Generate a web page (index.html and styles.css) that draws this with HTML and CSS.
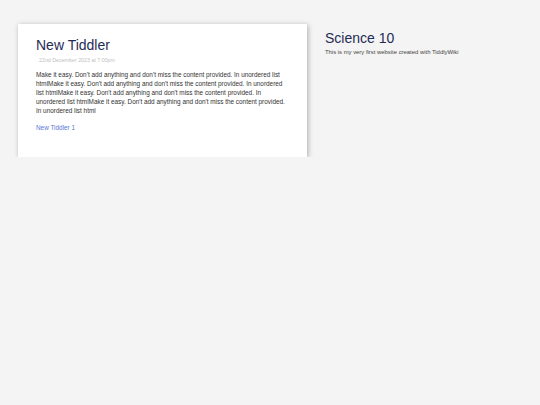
FILE: index.html
```html
<!DOCTYPE html>
<html>
<head>
<meta charset="utf-8">
<link rel="stylesheet" href="styles.css">
</head>
<body>
<div class="page">
  <main class="river">
    <article class="tiddler">
      <h2 class="title">New Tiddler</h2>
      <div class="date">22nd December 2023 at 7:00pm</div>
      <p class="body">Make it easy. Don't add anything and don't miss the content provided. In unordered list htmlMake it easy. Don't add anything and don't miss the content provided. In unordered list htmlMake it easy. Don't add anything and don't miss the content provided. In unordered list htmlMake it easy. Don't add anything and don't miss the content provided. In unordered list html</p>
      <a class="link" href="#">New Tiddler 1</a>
    </article>
  </main>
  <aside class="sidebar">
    <h1 class="site-title">Science 10</h1>
    <div class="site-subtitle">This is my very first website created with TiddlyWiki</div>
  </aside>
</div>
</body>
</html>
```
FILE: styles.css
```css
html, body {
  margin: 0;
  padding: 0;
  background: #f4f4f4;
  font-family: "Liberation Sans", Arial, sans-serif;
}
.page {
  display: flex;
  align-items: flex-start;
  padding: 24px 0 0 18px;
  gap: 18px;
}
.river {
  width: 289px;
  flex: none;
}
.tiddler {
  background: #fff;
  box-shadow: 1px 1px 5px rgba(0,0,0,0.3);
  padding: 13px 18px 0 18px;
  height: 133px;
  box-sizing: border-box;
}
.title {
  margin: 0;
  font-weight: normal;
  font-size: 14px;
  line-height: 16px;
  color: #1f2c55;
}
.date {
  margin: 4px 0 0 3px;
  font-size: 5.3px;
  line-height: 7px;
  color: #c0c0c0;
}
.body {
  margin: 7.4px 0 0 0;
  font-size: 6.4px;
  line-height: 8.9px;
  color: #333333;
}
.link {
  display: block;
  margin-top: 7.6px;
  font-size: 6.4px;
  line-height: 8.9px;
  color: #5778d8;
  text-decoration: none;
}
.sidebar {
  padding-top: 6px;
}
.site-title {
  margin: 0;
  font-weight: normal;
  font-size: 14px;
  line-height: 16px;
  color: #1f2c55;
}
.site-subtitle {
  margin-top: 2.5px;
  font-size: 5.9px;
  line-height: 7px;
  color: #444444;
}
```
